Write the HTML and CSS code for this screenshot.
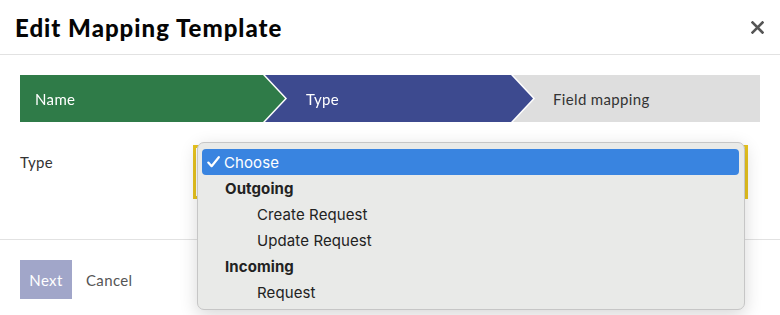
FILE: index.html
```html
<!DOCTYPE html>
<html>
<head>
<meta charset="utf-8">
<link rel="stylesheet" href="styles.css">
</head>
<body>
<div class="modal">
  <div class="header">
    <h1 class="title">Edit Mapping Template</h1>
    <button class="close" aria-label="Close">
      <svg width="13" height="13" viewBox="0 0 13 13"><path d="M1.5 1.5 L11.5 11.5 M11.5 1.5 L1.5 11.5" stroke="#555" stroke-width="2.6" stroke-linecap="square"/></svg>
    </button>
  </div>
  <div class="stepper">
    <div class="step-wrap s1"><div class="step green">Name</div></div>
    <div class="step-wrap s2"><div class="step blue">Type</div></div>
    <div class="step-wrap s3"><div class="step gray">Field mapping</div></div>
  </div>
  <div class="form">
    <div class="form-row">
      <label class="label">Type</label>
      <div class="select-box"></div>
    </div>
  </div>
  <div class="footer">
    <button class="btn-next">Next</button>
    <button class="btn-cancel">Cancel</button>
  </div>
  <div class="popup">
    <div class="opt selected"><svg class="check" width="13" height="12" viewBox="0 0 13 12"><path d="M1.3 6.6 L4.6 10.2 L11.8 1.2" fill="none" stroke="#fff" stroke-width="2.2" stroke-linecap="round" stroke-linejoin="round"/></svg>Choose</div>
    <div class="opt group">Outgoing</div>
    <div class="opt item">Create Request</div>
    <div class="opt item">Update Request</div>
    <div class="opt group">Incoming</div>
    <div class="opt item">Request</div>
  </div>
</div>
</body>
</html>
```

FILE: styles.css
```css
* { box-sizing: border-box; }
html, body { margin: 0; padding: 0; background: #fff; }
body { font-family: Lato, "Open Sans", sans-serif; color: #333; letter-spacing: 0.35px; }
.modal { position: relative; width: 780px; height: 315px; overflow: hidden; }

.header {
  height: 55px;
  border-bottom: 1px solid #e2e2e2;
  display: flex;
  align-items: center;
  justify-content: space-between;
  padding: 0 16px 0 15px;
}
.title {
  margin: 0;
  font-family: Lato, sans-serif;
  font-weight: 900;
  font-size: 24px;
  color: #050505;
  letter-spacing: 1px;
}
.close {
  border: 0; background: none; padding: 0; margin: 0;
  width: 13px; height: 13px; display: flex;
}

.stepper {
  display: flex;
  margin: 20px 20px 0;
  height: 47px;
}
.step-wrap {
  position: relative;
  filter: drop-shadow(2px 0 0 #fff);
  height: 47px;
}
.s1 { width: 265px; z-index: 3; }
.s2 { width: 290px; margin-left: -42px; z-index: 2; }
.s3 { flex: 1; margin-left: -43px; z-index: 1; filter: none; }
.step {
  height: 47px;
  display: flex;
  align-items: center;
  font-size: 15px;
  color: #fff;
}
.green { background: #2f7b48; padding-left: 15px; clip-path: polygon(0 0, calc(100% - 22px) 0, 100% 50%, calc(100% - 22px) 100%, 0 100%); }
.blue { background: #3d4a8f; padding-left: 63px; clip-path: polygon(0 0, calc(100% - 22px) 0, 100% 50%, calc(100% - 22px) 100%, 0 100%); }
.gray { background: #dedede; color: #333; padding-left: 63px; }

.form { height: 118px; padding: 23px 20px 0; border-bottom: 1px solid #e2e2e2; }
.form-row { display: flex; }
.label { width: 173px; font-size: 15px; padding-top: 8px; }
.select-box {
  width: 555px;
  height: 54px;
  border: 3px solid #e7c31f;
  box-shadow: inset -1px 0 0 #222;
  background: #fff;
}

.footer { display: flex; align-items: center; padding: 20px 20px 0; gap: 14px; }
.btn-next {
  width: 52px; height: 39px;
  border: 0; background: #a1a6c9; color: #fff;
  font-family: Lato, sans-serif; font-size: 15px; padding: 0; letter-spacing: 0.35px;
}
.btn-cancel {
  border: 0; background: none; padding: 0;
  font-family: Lato, sans-serif; font-size: 15px; color: #555; letter-spacing: 0.35px;
}

.popup {
  position: absolute;
  left: 197px; top: 142px;
  width: 548px; height: 168px;
  background: #e9eae8;
  border: 1px solid #c6c6c6;
  border-radius: 7px;
  box-shadow: 0 5px 18px rgba(0,0,0,0.16);
  padding: 6px 5px 5px 4px;
  font-family: Inter, "Noto Sans", sans-serif;
  font-size: 15px;
  color: #222;
  letter-spacing: 0.1px;
}
.opt { height: 26px; display: flex; align-items: center; padding-left: 22px; position: relative; }
.opt.selected { background: #3984e0; color: #fff; border-radius: 4px; }
.check { position: absolute; left: 5px; top: 7px; }
.opt.group { font-weight: 700; padding-left: 23px; }
.opt.item { padding-left: 55px; }
```
